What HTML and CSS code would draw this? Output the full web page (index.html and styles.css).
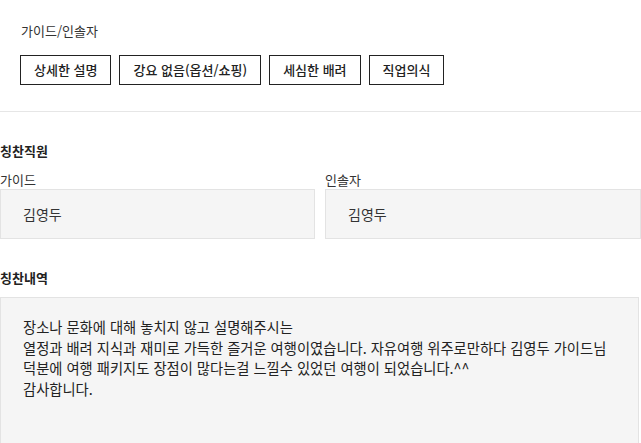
FILE: index.html
```html
<!DOCTYPE html>
<html lang="ko">
<head>
<meta charset="utf-8">
<link rel="stylesheet" href="styles.css">
<title>칭찬합니다</title>
</head>
<body>
<div class="keywords">
  <p class="keywords-title">가이드/인솔자</p>
  <ul class="tags">
    <li class="tag">상세한 설명</li>
    <li class="tag">강요 없음(옵션/쇼핑)</li>
    <li class="tag">세심한 배려</li>
    <li class="tag">직업의식</li>
  </ul>
</div>

<div class="praise">
  <h3 class="praise-title">칭찬직원</h3>
  <div class="staff">
    <div class="field">
      <label class="field-label">가이드</label>
      <div class="field-box">김영두</div>
    </div>
    <div class="field">
      <label class="field-label">인솔자</label>
      <div class="field-box">김영두</div>
    </div>
  </div>

  <h3 class="praise-title praise-title-content">칭찬내역</h3>
  <div class="content-box">
    장소나 문화에 대해 놓치지 않고 설명해주시는<br>
    열정과 배려 지식과 재미로 가득한 즐거운 여행이였습니다. 자유여행 위주로만하다 김영두 가이드님<br>
    덕분에 여행 패키지도 장점이 많다는걸 느낄수 있었던 여행이 되었습니다.^^<br>
    감사합니다.
  </div>
</div>
</body>
</html>
```

FILE: styles.css
```css
html { overflow: hidden; }

body {
  margin: 0;
  color: #333;
  font-family: "Noto Sans CJK KR", "Noto Sans", sans-serif;
  font-size: 13px;
  background: #fff;
}

.keywords {
  padding: 22px 20px 26px;
  border-bottom: 1px solid #e6e6e6;
}

.keywords-title {
  margin: 0 0 15px;
  line-height: 18px;
  padding-left: 1px;
}

.tags {
  display: flex;
  gap: 8px;
  margin: 0;
  padding: 0;
  list-style: none;
}

.tag {
  height: 28px;
  line-height: 28px;
  padding: 0 13px;
  border: 1px solid #222;
  font-weight: 500;
  color: #222;
}

.praise {
  padding-top: 30px;
}

.praise-title {
  margin: 0 0 11px;
  font-size: 13px;
  font-weight: 700;
  line-height: 18px;
  color: #222;
}

.praise-title-content {
  margin-top: 30px;
  margin-bottom: 10px;
}

.staff {
  display: grid;
  grid-template-columns: 315px 1fr;
  gap: 10px;
}

.field-label {
  display: block;
  line-height: 18px;
}

.field-box {
  height: 48px;
  line-height: 48px;
  padding-left: 22px;
  background: #f5f5f5;
  border: 1px solid #e3e3e3;
  font-size: 14px;
}

.content-box {
  margin-right: 2px;
  min-height: 160px;
  padding: 19px 22px;
  background: #f5f5f5;
  border: 1px solid #e3e3e3;
  font-size: 14.3px;
  line-height: 20.7px;
  color: #222;
}
```
